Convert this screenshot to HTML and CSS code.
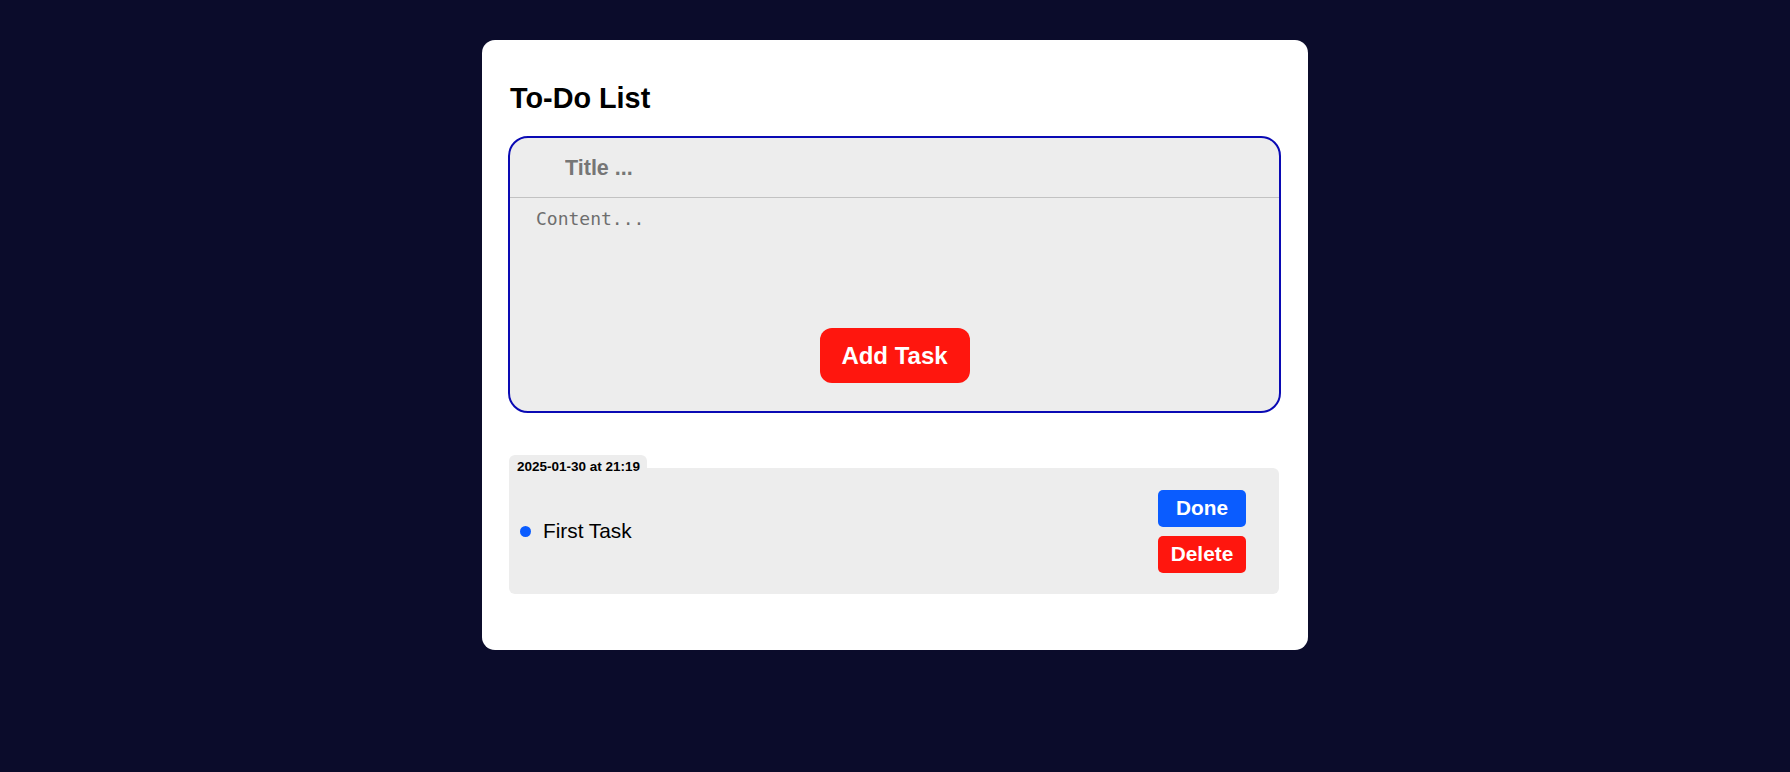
FILE: index.html
```html
<!DOCTYPE html>
<html lang="en">
<head>
<meta charset="utf-8">
<title>To-Do List</title>
<link rel="stylesheet" href="styles.css">
</head>
<body>
<main class="card">
  <h1 class="heading">To-Do List</h1>
  <form class="task-form">
    <input class="title-input" type="text" placeholder="Title ...">
    <textarea class="content-input" placeholder="Content..."></textarea>
    <div class="form-actions">
      <button type="button" class="add-btn">Add Task</button>
    </div>
  </form>
  <ul class="task-list">
    <li class="task">
      <span class="task-date">2025-01-30 at 21:19</span>
      <span class="task-dot"></span>
      <span class="task-title">First Task</span>
      <div class="task-actions">
        <button type="button" class="btn btn-done">Done</button>
        <button type="button" class="btn btn-delete">Delete</button>
      </div>
    </li>
  </ul>
</main>
</body>
</html>
```
FILE: styles.css
```css
* { box-sizing: border-box; }

html, body {
  margin: 0;
  height: 100%;
}

body {
  background: #0b0c2b;
  font-family: "Liberation Sans", Arial, sans-serif;
  padding-top: 40px;
}

.card {
  width: 826px;
  margin: 0 auto;
  background: #ffffff;
  border-radius: 13px;
  padding: 42px 27px 56px 26px;
}

.heading {
  margin: 0 0 21px;
  font-size: 28.8px;
  font-weight: bold;
  color: #000;
  line-height: 33px;
  padding-left: 2px;
}

.task-form {
  display: flex;
  flex-direction: column;
  background: #ededed;
  border: 2px solid #0a0ab4;
  border-radius: 20px;
  overflow: hidden;
}

.title-input {
  height: 60px;
  border: none;
  border-bottom: 1px solid #c2c2c2;
  background: transparent;
  padding: 2px 0 0 55px;
  font-family: "Liberation Sans", Arial, sans-serif;
  font-size: 21.5px;
  font-weight: bold;
  color: #333;
  outline: none;
}

.title-input::placeholder { color: #767676; }

.content-input {
  height: 112px;
  border: none;
  background: transparent;
  resize: none;
  padding: 10px 26px;
  font-family: "DejaVu Sans Mono", "Liberation Mono", monospace;
  font-size: 18px;
  line-height: 21px;
  color: #333;
  outline: none;
}

.content-input::placeholder { color: #6e6e6e; }

.form-actions {
  display: flex;
  justify-content: center;
  padding: 18px 0 28px;
}

.add-btn {
  width: 150px;
  height: 55px;
  border: none;
  border-radius: 12px;
  background: #ff160e;
  color: #fff;
  font-family: "Liberation Sans", Arial, sans-serif;
  font-size: 24px;
  font-weight: bold;
  padding: 0;
}

.task-list {
  list-style: none;
  margin: 55px 2px 0 1px;
  padding: 0;
}

.task {
  position: relative;
  display: flex;
  align-items: center;
  height: 126px;
  background: #ededed;
  border-radius: 6px;
  padding: 0 33px 0 11px;
}

.task-date {
  position: absolute;
  top: -13px;
  left: 0;
  background: #ededed;
  border-radius: 6px 6px 0 0;
  padding: 4px 7px 0 8px;
  line-height: 16px;
  font-size: 13.5px;
  font-weight: bold;
  color: #000;
}

.task-dot {
  width: 11px;
  height: 11px;
  border-radius: 50%;
  background: #0a5cff;
  margin-right: 12px;
  flex-shrink: 0;
}

.task-title {
  flex: 1;
  font-size: 20.8px;
  color: #000;
}

.task-actions {
  display: flex;
  flex-direction: column;
  gap: 9px;
}

.btn {
  width: 88px;
  height: 37px;
  border: none;
  border-radius: 5px;
  color: #fff;
  font-family: "Liberation Sans", Arial, sans-serif;
  font-size: 20.8px;
  font-weight: bold;
  padding: 0;
}

.btn-done { background: #0a5cff; }
.btn-delete { background: #ff160e; }
```
